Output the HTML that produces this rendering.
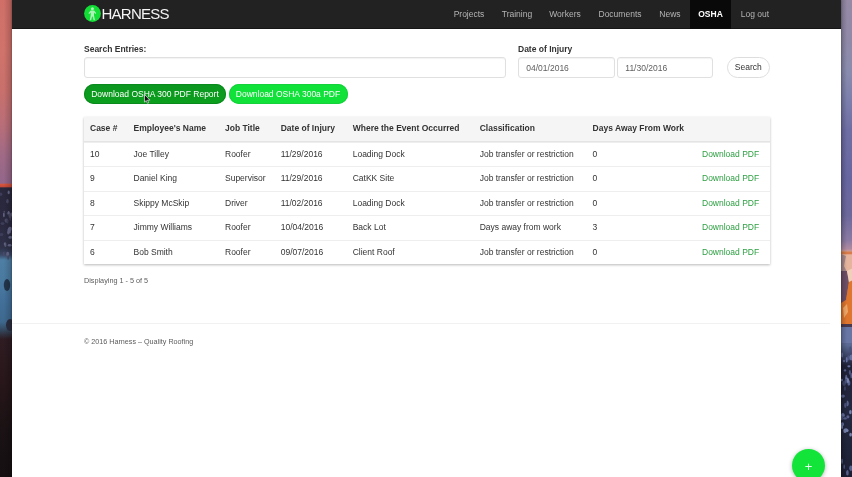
<!DOCTYPE html>
<html><head><meta charset="utf-8">
<style>
*{box-sizing:border-box;margin:0;padding:0}
html,body{width:852px;height:477px;overflow:hidden;background:#333}
body{font-family:"Liberation Sans",sans-serif;color:#333;position:relative;font-size:8.5px}
#bgl{position:absolute;left:0;top:0;width:13px;height:477px;background:linear-gradient(to bottom,#cf6f68 0,#d0736b 50px,#c9706c 90px,#b86e78 125px,#a06a86 155px,#93668a 183px,#d4543c 184.5px,#c84a3a 186.5px,#2a283c 188px,#2a2940 225px,#30324a 248px,#3a4a68 255px,#4e7ea4 260px,#4a7aa0 280px,#42709a 300px,#3e688e 322px,#34485e 330px,#2e1c22 339px,#28161a 380px,#1a1214 430px,#150f11 477px)}
#bgr{position:absolute;left:840.5px;top:0;width:12px;height:477px;background:linear-gradient(to bottom,#968aa6 0,#9089a8 40px,#8a8cae 70px,#7c7fac 100px,#6f6ea4 130px,#6866a0 180px,#6c689c 215px,#8a7aa4 240px,#b08aa0 249px,#e2ac8c 253px,#dca288 272px,#d8743a 280px,#d06428 300px,#c25a2a 322px,#6a6c90 329px,#5a6a94 345px,#3a4264 356px,#1e2036 366px,#242840 410px,#20243a 450px,#1c1f34 477px)}
#win{position:absolute;left:12px;top:0;width:829px;height:477px;background:#fff;box-shadow:0 0 2px rgba(0,0,0,.35);will-change:transform}
#nav{position:absolute;left:0;top:0;width:829px;height:28.5px;background:#222;border-bottom:1px solid #161616}
#nav .it{position:absolute;top:0;height:28.5px;line-height:28.6px;color:#b4b4b4;font-size:8.5px;text-align:center}
#nav .act{background:#090909;color:#fff;font-weight:bold}
.abs{position:absolute}
.lbl{font-weight:bold;font-size:8.5px;color:#333}
.inp{position:absolute;border:1px solid #e0e0e0;border-radius:3px;background:#fff;box-shadow:inset 0 1px 1px rgba(0,0,0,.05);font-size:8.5px;color:#606060;line-height:20.3px;padding-left:7.8px}
.btn{position:absolute;border-radius:10px;color:#fff;font-size:8.5px;text-align:center;line-height:20px;height:20px}
.hr,.tr{position:absolute;left:0;width:686px;height:24.5px;line-height:23.5px;font-size:8.5px;color:#333}
.hr{top:0;font-weight:bold;height:25px;line-height:23px}
.tr{border-top:1px solid #eee}
.c{position:absolute;top:0;white-space:nowrap}
.dl{color:#2ea043}
</style></head><body>
<div id="bgl"><svg class="abs" style="left:0;top:0" width="13" height="477" viewBox="0 0 13 477"><g filter="url(#bl)"><ellipse cx="10.6" cy="228.3" rx="1.8" ry="1.3" fill="#3e3e5a"/><ellipse cx="9.9" cy="229.1" rx="1.7" ry="2.4" fill="#66688a"/><ellipse cx="0.8" cy="194.3" rx="1.5" ry="1.7" fill="#3e3e5a"/><ellipse cx="7.5" cy="201.2" rx="1.2" ry="2.2" fill="#4a4a66"/><ellipse cx="3.9" cy="214.9" rx="0.8" ry="2.4" fill="#66688a"/><ellipse cx="4.9" cy="244.0" rx="1.1" ry="1.4" fill="#66688a"/><ellipse cx="10.3" cy="218.4" rx="0.8" ry="2.4" fill="#3e3e5a"/><ellipse cx="6.4" cy="220.6" rx="1.8" ry="2.2" fill="#4a4a66"/><ellipse cx="7.7" cy="254.1" rx="1.5" ry="2.4" fill="#66688a"/><ellipse cx="5.4" cy="244.7" rx="1.0" ry="2.3" fill="#5a5c78"/><ellipse cx="8.6" cy="213.6" rx="1.8" ry="1.4" fill="#4a4a66"/><ellipse cx="8.7" cy="192.4" rx="1.1" ry="1.8" fill="#66688a"/><ellipse cx="9.5" cy="231.7" rx="1.4" ry="1.8" fill="#66688a"/><ellipse cx="10.2" cy="215.5" rx="1.7" ry="2.5" fill="#4a4a66"/><ellipse cx="8.3" cy="232.2" rx="1.1" ry="2.4" fill="#66688a"/><ellipse cx="9.5" cy="229.5" rx="1.9" ry="1.8" fill="#66688a"/><ellipse cx="7.5" cy="221.2" rx="0.9" ry="2.2" fill="#3e3e5a"/><ellipse cx="11.8" cy="214.4" rx="1.3" ry="1.9" fill="#5a5c78"/><ellipse cx="3.8" cy="254.0" rx="1.0" ry="2.2" fill="#4a4a66"/><ellipse cx="1.4" cy="234.6" rx="1.9" ry="1.5" fill="#3e3e5a"/><ellipse cx="4.3" cy="211.8" rx="0.8" ry="1.0" fill="#4a4a66"/><ellipse cx="9.7" cy="245.3" rx="1.9" ry="1.2" fill="#66688a"/><ellipse cx="8.1" cy="257.5" rx="0.8" ry="2.4" fill="#4a4a66"/><ellipse cx="2.5" cy="223.6" rx="1.9" ry="1.3" fill="#3e3e5a"/><ellipse cx="10.3" cy="237.4" rx="1.9" ry="1.4" fill="#66688a"/><ellipse cx="8.6" cy="212.4" rx="1.0" ry="1.5" fill="#66688a"/><ellipse cx="7" cy="285" rx="3.2" ry="6" fill="#24344c"/><ellipse cx="10" cy="325" rx="4" ry="6" fill="#2a2e40"/></g></svg></div>
<div id="bgr"><svg class="abs" style="left:0;top:0" width="12" height="477" viewBox="0 0 12 477"><defs><filter id="bl"><feGaussianBlur stdDeviation="0.7"/></filter></defs><g filter="url(#bl)"><rect x="0" y="251.5" width="12" height="3" fill="#d87c4c"/><rect x="0" y="254.5" width="12" height="18" fill="#e6b49c"/><polygon points="0,254 5,256 3,266 6,272 0,274" fill="#a88a8c"/><polygon points="0,271 6,271 8,282 5,300 0,304" fill="#6e5068"/><polygon points="6,271 12,268 12,282 8,283" fill="#f0d0b8"/><polygon points="8,282 12,280 12,326 0,326 0,303 5,300" fill="#df762e"/><polygon points="2,308 6,304 7,312 3,318" fill="#f0a868"/><rect x="0" y="324" width="12" height="3" fill="#4a3a50"/><rect x="0" y="327" width="12" height="16" fill="#6876a6"/><ellipse cx="3.0" cy="361.0" rx="1.2" ry="1.3" fill="#56608c"/><ellipse cx="0.7" cy="417.2" rx="1.1" ry="3.0" fill="#56608c"/><ellipse cx="2.8" cy="415.6" rx="1.1" ry="1.3" fill="#56608c"/><ellipse cx="3.2" cy="466.8" rx="0.8" ry="2.3" fill="#48527c"/><ellipse cx="8.9" cy="372.4" rx="1.1" ry="2.3" fill="#48527c"/><ellipse cx="1.4" cy="424.3" rx="1.6" ry="2.0" fill="#6672a0"/><ellipse cx="3.1" cy="383.3" rx="1.9" ry="2.6" fill="#3c4468"/><ellipse cx="9.3" cy="348.9" rx="1.1" ry="2.4" fill="#48527c"/><ellipse cx="9.4" cy="412.1" rx="1.3" ry="2.2" fill="#7682ac"/><ellipse cx="5.2" cy="377.4" rx="1.1" ry="2.6" fill="#56608c"/><ellipse cx="1.0" cy="426.9" rx="1.1" ry="2.1" fill="#7682ac"/><ellipse cx="7.9" cy="366.3" rx="1.6" ry="1.1" fill="#6672a0"/><ellipse cx="7.2" cy="403.6" rx="1.0" ry="1.9" fill="#3c4468"/><ellipse cx="3.9" cy="418.4" rx="1.9" ry="1.2" fill="#56608c"/><ellipse cx="7.9" cy="383.0" rx="1.5" ry="2.7" fill="#56608c"/><ellipse cx="4.0" cy="370.4" rx="1.3" ry="1.1" fill="#56608c"/><ellipse cx="9.9" cy="468.3" rx="1.7" ry="2.9" fill="#56608c"/><ellipse cx="3.9" cy="388.5" rx="0.9" ry="2.3" fill="#3c4468"/><ellipse cx="7.6" cy="357.8" rx="1.5" ry="2.8" fill="#48527c"/><ellipse cx="1.9" cy="396.1" rx="2.0" ry="1.7" fill="#56608c"/><ellipse cx="4.3" cy="405.3" rx="1.2" ry="2.6" fill="#48527c"/><ellipse cx="6.5" cy="403.4" rx="1.0" ry="2.8" fill="#56608c"/><ellipse cx="1.1" cy="355.0" rx="1.0" ry="2.4" fill="#6672a0"/><ellipse cx="6.9" cy="416.8" rx="1.5" ry="1.6" fill="#56608c"/><ellipse cx="1.8" cy="414.7" rx="1.7" ry="1.8" fill="#6672a0"/><ellipse cx="5.5" cy="378.5" rx="1.3" ry="1.1" fill="#7682ac"/><ellipse cx="5.2" cy="429.6" rx="1.3" ry="1.4" fill="#6672a0"/><ellipse cx="0.8" cy="380.1" rx="1.1" ry="1.4" fill="#6672a0"/><ellipse cx="4.9" cy="381.0" rx="1.2" ry="2.8" fill="#48527c"/><ellipse cx="6.4" cy="472.8" rx="1.3" ry="2.8" fill="#56608c"/><ellipse cx="5.7" cy="359.7" rx="1.0" ry="2.7" fill="#6672a0"/><ellipse cx="4.0" cy="430.8" rx="1.7" ry="2.3" fill="#7682ac"/><ellipse cx="6.0" cy="430.5" rx="1.6" ry="1.5" fill="#7682ac"/><ellipse cx="10.5" cy="357.4" rx="2.0" ry="2.9" fill="#6672a0"/><ellipse cx="1.0" cy="461.3" rx="0.9" ry="2.9" fill="#56608c"/><ellipse cx="9.6" cy="434.7" rx="1.3" ry="1.9" fill="#7682ac"/><ellipse cx="10.2" cy="375.5" rx="0.8" ry="2.8" fill="#56608c"/><ellipse cx="6.9" cy="380.4" rx="1.2" ry="2.5" fill="#7682ac"/></g></svg></div>
<div class="abs" style="left:0;top:0;width:13px;height:477px;background:linear-gradient(to right,rgba(0,0,0,0) 0,rgba(0,0,0,0) 4px,rgba(0,0,0,.2) 12px)"></div>
<div class="abs" style="left:841px;top:0;width:11px;height:477px;background:linear-gradient(to right,rgba(0,0,0,.22) 0,rgba(0,0,0,0) 6px)"></div>
<div id="win">
 <div id="nav">
  <svg class="abs" style="left:71.8px;top:5px" width="17" height="17" viewBox="0 0 17 17"><circle cx="8.5" cy="8.5" r="8.4" fill="#12de36"/><g fill="#c9f7cf" opacity=".85"><circle cx="8.4" cy="3.7" r="1.5"/><path d="M6.6 5.6h3.6l2 2.6-.8.7-1.4-1.5v3.2l1 4.6H9.6l-1-3.8h-.5l-1 3.8H5.7l1-4.6V7.6L5.2 8.9l-.8-.7z"/></g></svg>
  <div class="abs" style="left:89.5px;top:5px;color:#f4f4f4;font-size:15px;line-height:17px;letter-spacing:-0.76px">HARNESS</div>
  <div class="it" style="left:432px;width:50px">Projects</div>
  <div class="it" style="left:481px;width:48px">Training</div>
  <div class="it" style="left:529px;width:48px">Workers</div>
  <div class="it" style="left:577px;width:62px">Documents</div>
  <div class="it" style="left:639px;width:38px">News</div>
  <div class="it act" style="left:678px;width:41px">OSHA</div>
  <div class="it" style="left:719px;width:48px">Log out</div>
 </div>
 <div class="abs lbl" style="left:72px;top:44px">Search Entries:</div>
 <div class="inp" style="left:72px;top:57px;width:421.5px;height:20.5px"></div>
 <div class="abs lbl" style="left:506px;top:44px">Date of Injury</div>
 <div class="inp" style="left:505.5px;top:57px;width:97px;height:20.5px">04/01/2016</div>
 <div class="inp" style="left:604.5px;top:57px;width:96.5px;height:20.5px">11/30/2016</div>
 <div class="abs" style="left:714.5px;top:57px;width:43.5px;height:20.5px;border:1px solid #ddd;border-radius:10.5px;text-align:center;line-height:19px;font-size:8.5px;color:#333">Search</div>
 <div class="btn" style="left:72px;top:84px;width:142px;background:linear-gradient(#0c9620,#0ba01d);box-shadow:inset 0 0 0 1px #0a8a1c">Download OSHA 300 PDF Report</div>
 <div class="btn" style="left:216.5px;top:84px;width:119px;background:#10e23a;box-shadow:inset 0 0 0 1px #16d03c">Download OSHA 300a PDF</div>
 <svg class="abs" style="left:132px;top:94px" width="7" height="10" viewBox="0 0 7 10"><path d="M0.5 0.5v7.6l1.8-1.6 1.2 2.8 1.2-.5-1.2-2.7h2.4z" fill="#111" stroke="#e8e8e8" stroke-width=".7"/></svg>
 <div class="abs" id="tbl" style="left:72px;top:116.5px;width:686px;height:147.5px;background:#fff;box-shadow:0 1px 2.5px rgba(0,0,0,.28)">
  <div class="abs" style="left:0;top:0;width:686px;height:25px;background:#f5f5f5;border-bottom:1px solid #e4e4e4"></div>
  <div class="hr"><span class="c" style="left:6px">Case #</span><span class="c" style="left:49.5px">Employee's Name</span><span class="c" style="left:141px">Job Title</span><span class="c" style="left:196.7px">Date of Injury</span><span class="c" style="left:268.7px">Where the Event Occurred</span><span class="c" style="left:395.7px">Classification</span><span class="c" style="left:508.6px">Days Away From Work</span></div>
  <div class="tr" style="top:25.0px"><span class="c" style="left:6px">10</span><span class="c" style="left:49.5px">Joe Tilley</span><span class="c" style="left:141px">Roofer</span><span class="c" style="left:196.7px">11/29/2016</span><span class="c" style="left:268.7px">Loading Dock</span><span class="c" style="left:395.7px">Job transfer or restriction</span><span class="c" style="left:508.6px">0</span><span class="c dl" style="left:618px">Download PDF</span></div>
  <div class="tr" style="top:49.5px"><span class="c" style="left:6px">9</span><span class="c" style="left:49.5px">Daniel King</span><span class="c" style="left:141px">Supervisor</span><span class="c" style="left:196.7px">11/29/2016</span><span class="c" style="left:268.7px">CatKK Site</span><span class="c" style="left:395.7px">Job transfer or restriction</span><span class="c" style="left:508.6px">0</span><span class="c dl" style="left:618px">Download PDF</span></div>
  <div class="tr" style="top:74.0px"><span class="c" style="left:6px">8</span><span class="c" style="left:49.5px">Skippy McSkip</span><span class="c" style="left:141px">Driver</span><span class="c" style="left:196.7px">11/02/2016</span><span class="c" style="left:268.7px">Loading Dock</span><span class="c" style="left:395.7px">Job transfer or restriction</span><span class="c" style="left:508.6px">0</span><span class="c dl" style="left:618px">Download PDF</span></div>
  <div class="tr" style="top:98.5px"><span class="c" style="left:6px">7</span><span class="c" style="left:49.5px">Jimmy Williams</span><span class="c" style="left:141px">Roofer</span><span class="c" style="left:196.7px">10/04/2016</span><span class="c" style="left:268.7px">Back Lot</span><span class="c" style="left:395.7px">Days away from work</span><span class="c" style="left:508.6px">3</span><span class="c dl" style="left:618px">Download PDF</span></div>
  <div class="tr" style="top:123.0px"><span class="c" style="left:6px">6</span><span class="c" style="left:49.5px">Bob Smith</span><span class="c" style="left:141px">Roofer</span><span class="c" style="left:196.7px">09/07/2016</span><span class="c" style="left:268.7px">Client Roof</span><span class="c" style="left:395.7px">Job transfer or restriction</span><span class="c" style="left:508.6px">0</span><span class="c dl" style="left:618px">Download PDF</span></div>
 </div>
 <div class="abs" style="left:72px;top:276.3px;font-size:7.25px;color:#5c5c5c">Displaying 1 - 5 of 5</div>
 <div class="abs" style="left:0;top:323.2px;width:818px;height:1px;background:#f1f1f1"></div>
 <div class="abs" style="left:72px;top:337.2px;font-size:7.2px;color:#5c5c5c">© 2016 Harness – Quality Roofing</div>
 <div class="abs" style="left:780px;top:449px;width:33px;height:33px;border-radius:17px;background:#12e43a;box-shadow:0 1px 4px rgba(0,0,0,.3)"></div>
 <div class="abs" style="left:780px;top:449.5px;width:33px;height:33px;color:#eafff0;font-size:13px;line-height:33px;text-align:center">+</div>
</div>
</body></html>
